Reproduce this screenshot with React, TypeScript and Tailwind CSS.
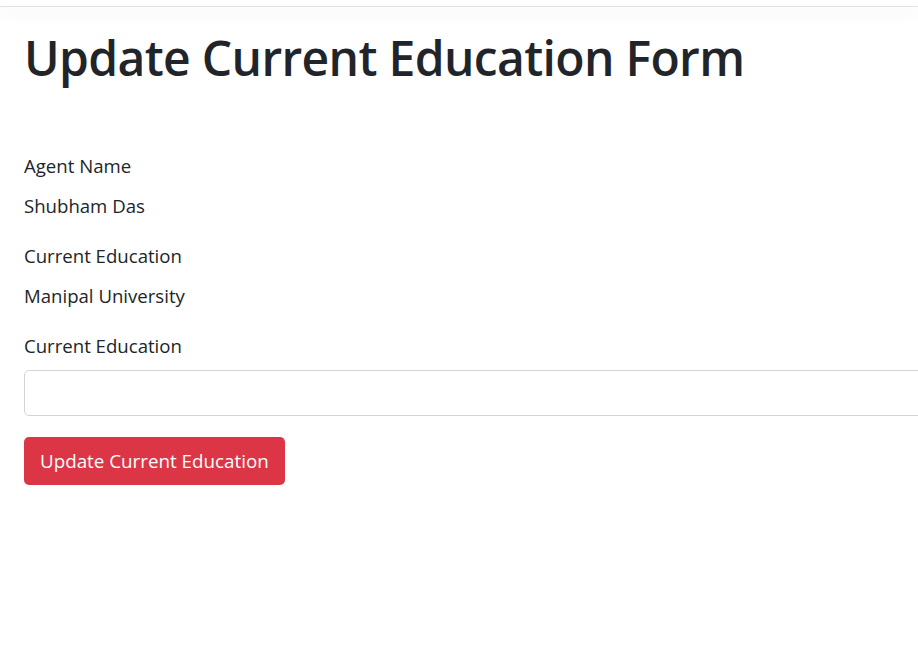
export default function App() {
  return (
    <div className="min-h-screen w-[918px] overflow-hidden bg-white text-[#212529] font-['Open_Sans',sans-serif]">
      <div className="relative h-[7px] bg-white border-b border-[#e2e1e8] shadow-[0_6px_18px_rgba(0,0,0,0.05)]" />

      <div className="px-[24px]">
        <h1 className="mt-[21px] text-[48px] leading-[60px] font-semibold tracking-[-0.65px] whitespace-nowrap">
          Update Current Education Form
        </h1>

        <form className="mt-[63px]">
          <div className="mb-[20px]">
            <div className="text-[18.6px] leading-[30px] mb-[10px]">Agent Name</div>
            <div className="text-[18.6px] leading-[30px]">Shubham Das</div>
          </div>

          <div className="mb-[20px]">
            <div className="text-[18.6px] leading-[30px] mb-[10px]">Current Education</div>
            <div className="text-[18.6px] leading-[30px]">Manipal University</div>
          </div>

          <div className="mb-[21px]">
            <label className="block text-[18.6px] leading-[30px] mb-[9px]">Current Education</label>
            <input
              type="text"
              className="block w-[1000px] h-[46px] rounded-[5px] border border-[#d4d3dc] px-4 text-[18px] outline-none"
            />
          </div>

          <button
            type="button"
            className="h-[48px] px-[16px] rounded-[5px] bg-[#dc3545] text-white text-[18.8px] leading-[30px]"
          >
            Update Current Education
          </button>
        </form>
      </div>
    </div>
  );
}
